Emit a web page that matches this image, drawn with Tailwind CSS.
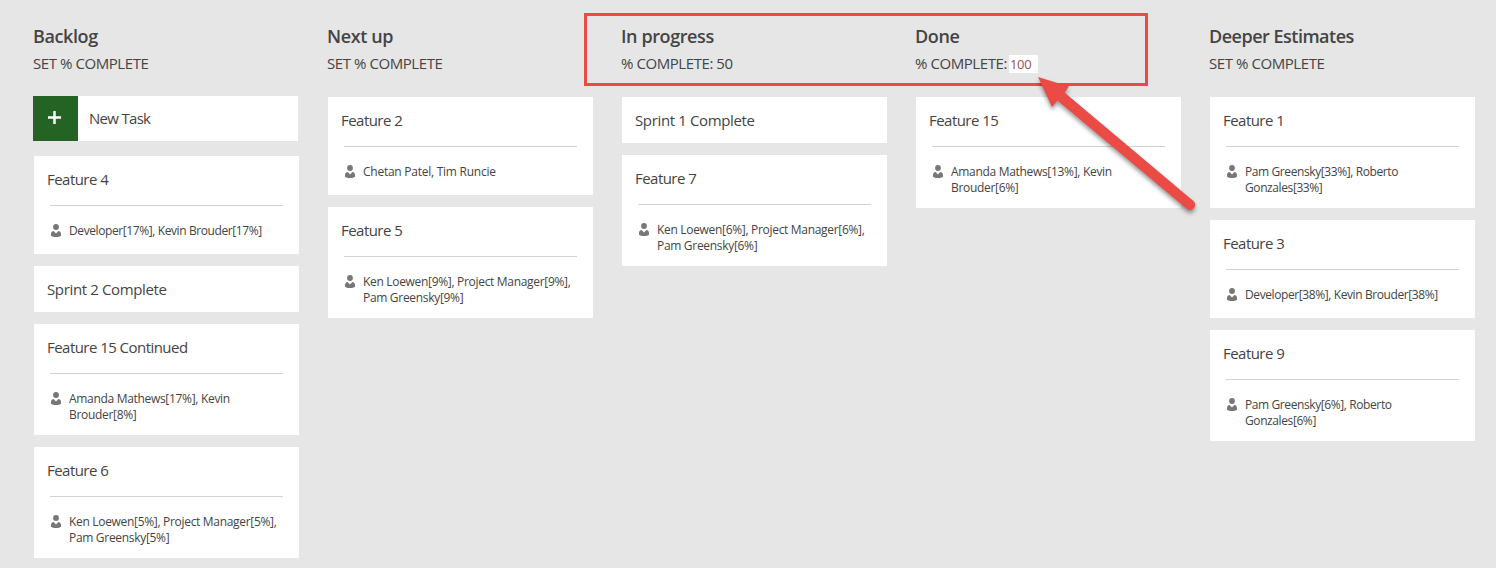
<!DOCTYPE html>
<html lang="en">
<head>
<meta charset="utf-8">
<title>Task board</title>
<script src="https://cdn.jsdelivr.net/npm/@tailwindcss/browser@4"></script>
</head>
<body class="relative h-[568px] w-[1496px] overflow-hidden bg-[#e6e6e6] font-['Open_Sans','Noto_Sans',sans-serif] text-[#444]">
<svg class="hidden"><symbol id="person" viewBox="0 0 12 13"><circle cx="6" cy="3" r="2.9"/><path d="M1 10.2C1 8.3 2 7.300 3.600 7.100L6 9.600 8.400 7.100C10 7.300 11 8.300 11 10.200V11.800C10.100 12.700 8.100 13 6 13S1.900 12.700 1 11.800Z"/></symbol></svg>
<main id="board" class="flex gap-[29px] pl-[33px] pt-[24px]"></main>

<div class="absolute left-[584px] top-[13px] h-[73px] w-[564px] border-3 border-[#ea4b45]"></div>
<svg class="absolute left-[1020px] top-[60px] drop-shadow-[0px_3px_2px_rgba(0,0,0,0.4)]" width="200" height="170" viewBox="1020 60 200 170"><path d="M1038 77L1069 86.500 1064.500 92.500 1194 201.500A5.200 5.200 0 0 1 1187 209L1057.500 100.500 1052 107Z" fill="#ea4b45"/></svg>

<script>
const columns = [
  ['Backlog', 'SET % COMPLETE', '', [['Feature 4', 'Developer[17%], Kevin Brouder[17%]'], ['Sprint 2 Complete'], ['Feature 15 Continued', 'Amanda Mathews[17%], Kevin', 'Brouder[8%]'], ['Feature 6', 'Ken Loewen[5%], Project Manager[5%],', 'Pam Greensky[5%]']]],
  ['Next up', 'SET % COMPLETE', '', [['Feature 2', 'Chetan Patel, Tim Runcie'], ['Feature 5', 'Ken Loewen[9%], Project Manager[9%],', 'Pam Greensky[9%]']]],
  ['In progress', '% COMPLETE: 50', '', [['Sprint 1 Complete'], ['Feature 7', 'Ken Loewen[6%], Project Manager[6%],', 'Pam Greensky[6%]']]],
  ['Done', '% COMPLETE:', '100', [['Feature 15', 'Amanda Mathews[13%], Kevin', 'Brouder[6%]']]],
  ['Deeper Estimates', 'SET % COMPLETE', '', [['Feature 1', 'Pam Greensky[33%], Roberto', 'Gonzales[33%]'], ['Feature 3', 'Developer[38%], Kevin Brouder[38%]'], ['Feature 9', 'Pam Greensky[6%], Roberto', 'Gonzales[6%]']]]
];
const tracking = text =>
  text.startsWith('Dev') ? 'tracking-[-0.4px]' :
  text.startsWith('Pam') ? 'tracking-[-0.4px]' :
  text.startsWith('Chetan') ? 'tracking-[-0.25px]' : 'tracking-[-0.31px]';
const card = ([title, ...people]) => `
  <article class="ml-px w-[265px] bg-white ${people.length === 0 ? 'h-[46px]' : people.length === 1 ? 'h-[98px]' : 'h-[111px]'}">
    <h3 class="flex h-[49px] items-center pb-[2px] pl-[13px] text-[15px] whitespace-nowrap ${title.startsWith('Sprint') ? 'tracking-[-0.36px]' : 'tracking-[-0.54px]'}"><span>${title}</span></h3>
    ${people.length ? `<div class="mx-4 h-px bg-[#d2d2d2]"></div>
    <div class="flex gap-[7px] pl-4 pt-[17px]">
      <svg class="mt-px h-[13px] w-3 shrink-0 fill-[#777]"><use href="#person"/></svg>
      <p class="text-[12px] leading-4 whitespace-nowrap ${tracking(people[0])}">${people.map(p => `<span>${p}</span>`).join('<br>')}</p>
    </div>` : ''}
  </article>`;
document.getElementById('board').innerHTML = columns.map(([name, status, value, cards], i) => `
  <section class="w-[265px] shrink-0">
    <h2 class="h-6 text-[18px] leading-6 font-semibold whitespace-nowrap ${i === 4 ? 'tracking-[-0.5px]' : 'tracking-[-0.4px]'}"><span>${name}</span></h2>
    <div class="mt-[6px] flex h-[19px] items-center gap-[2px] text-[15px] leading-[19px] whitespace-nowrap tracking-[-0.43px]"><span>${status}</span>${value ? `<span class="h-[18px] w-[29px] bg-white pl-px text-[13px] leading-[18px] tracking-[-0.3px] text-[#96534f]">${value}</span>` : ''}</div>
    ${i === 0 ? `<div class="mt-[23px] mb-[15px] flex h-[45px] w-[265px] items-center bg-white">
      <div class="flex size-[45px] items-center justify-center bg-[#256325]"><svg class="mr-[2px] mb-[2px] size-[13px]" viewBox="0 0 13 13"><path d="M6.500 0V13M0 6.500H13" stroke="#fff" stroke-width="2.500"/></svg></div>
      <span class="pl-[11px] text-[15px] tracking-[-0.7px]">New Task</span></div>` : ''}
    <div class="flex flex-col gap-3 ${i ? 'mt-6' : ''}">${cards.map(card).join('')}</div>
  </section>`).join('');
</script>
</body>
</html>
